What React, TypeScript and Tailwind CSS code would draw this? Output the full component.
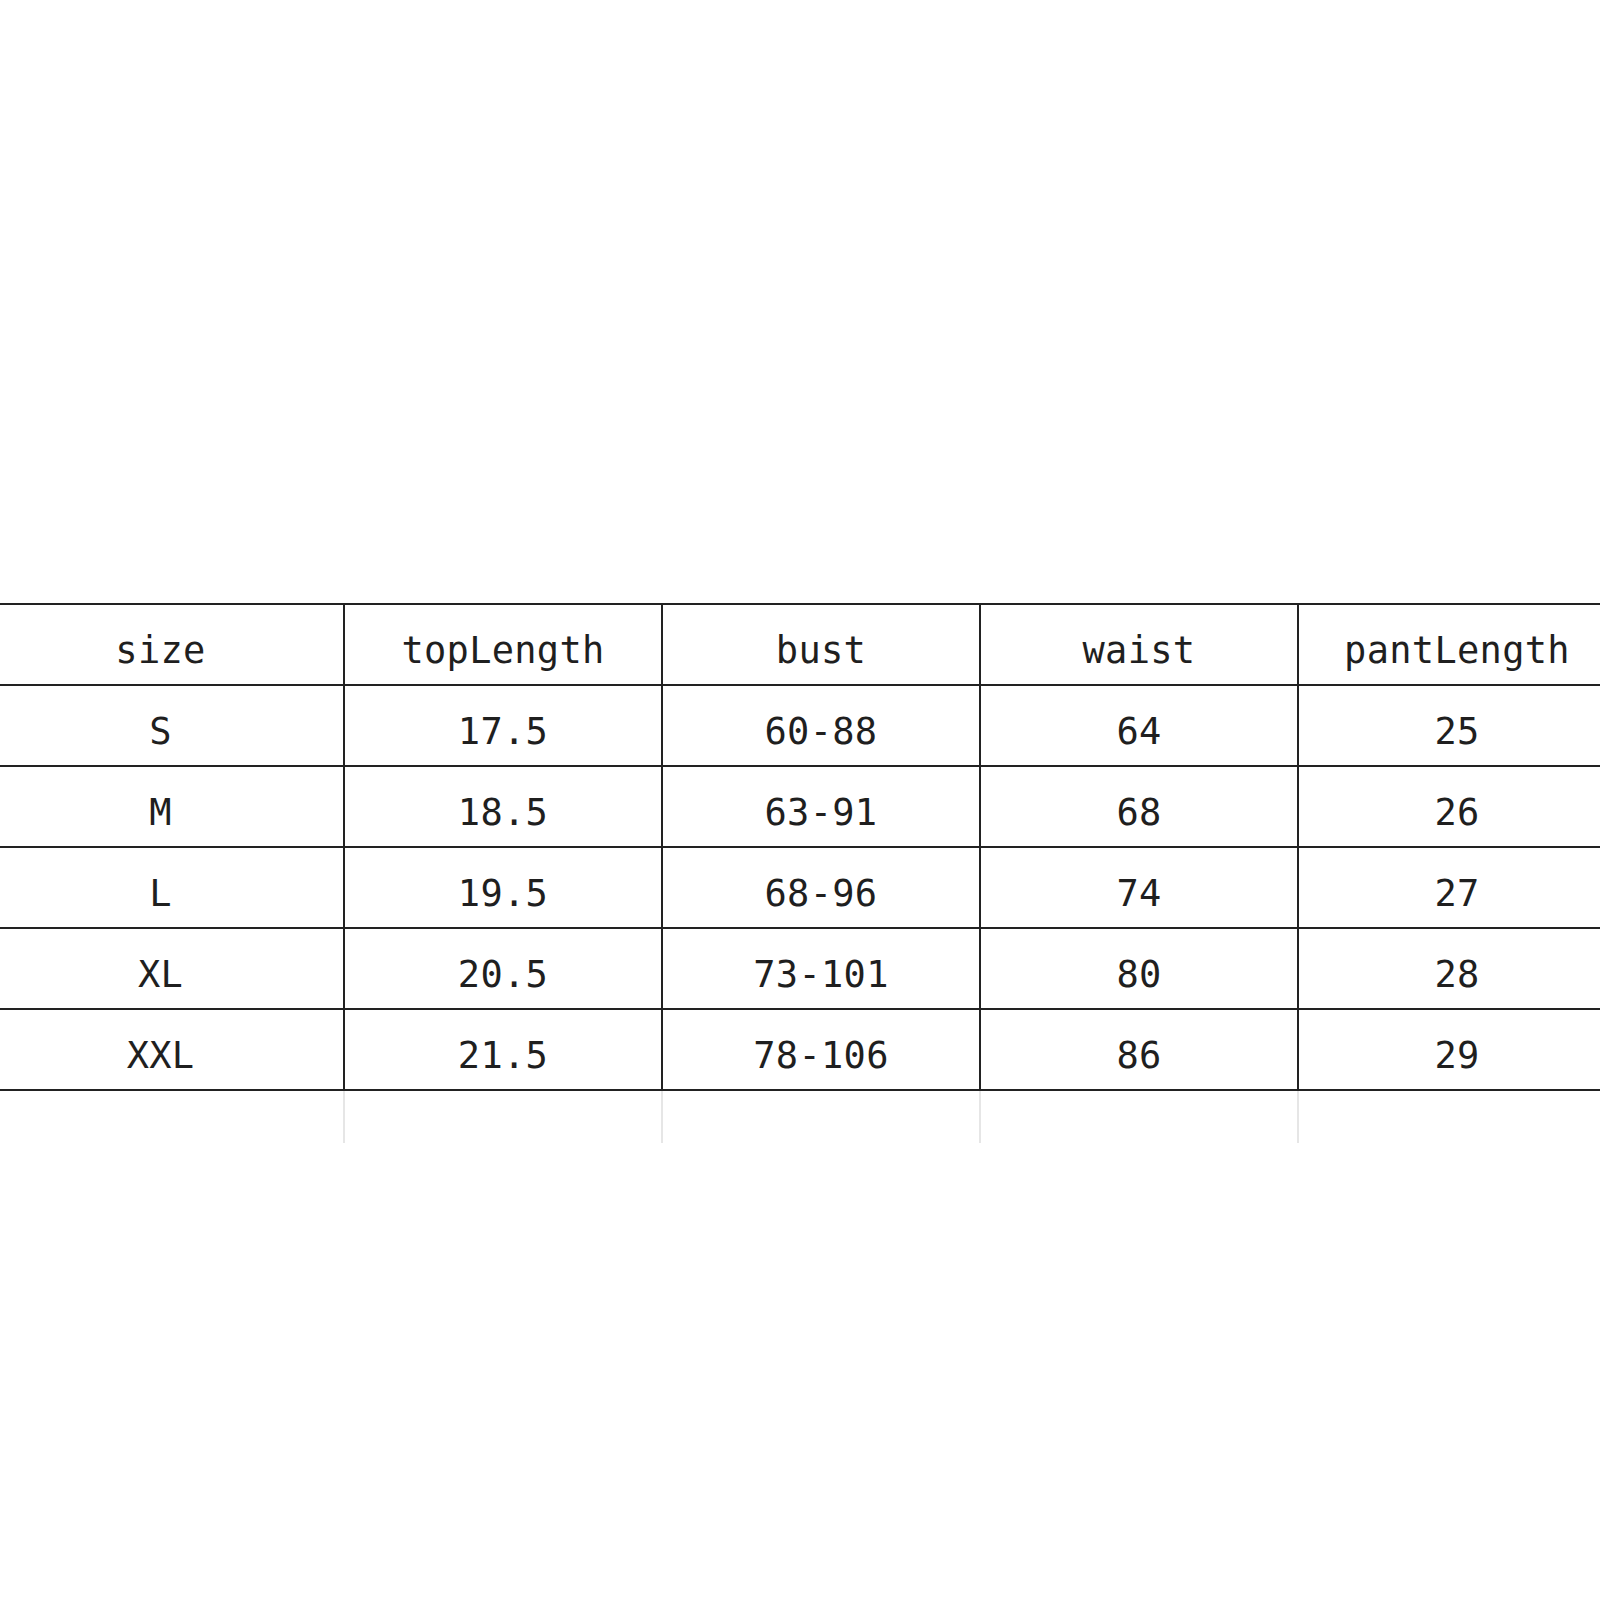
const headers = ['size', 'topLength', 'bust', 'waist', 'pantLength'];

const rows = [
  ['S', '17.5', '60-88', '64', '25'],
  ['M', '18.5', '63-91', '68', '26'],
  ['L', '19.5', '68-96', '74', '27'],
  ['XL', '20.5', '73-101', '80', '28'],
  ['XXL', '21.5', '78-106', '86', '29'],
];

const grid = 'grid grid-cols-[367px_318px_318px_318px_318px] -ml-[22px] w-[1639px]';

function Row({ cells }: { cells: string[] }) {
  return (
    <div className={grid}>
      {cells.map((c, i) => (
        <div
          key={i}
          className="h-[81px] pt-[12px] border-b-2 border-r-2 border-[#222] flex items-center justify-center text-[37px] tracking-[0.3px] text-[#1f1f1f]"
        >
          {c}
        </div>
      ))}
    </div>
  );
}

export default function App() {
  return (
    <div className="w-[1600px] h-[1600px] bg-white overflow-hidden pt-[603px] font-['DejaVu_Sans_Mono',monospace]">
      <div className="border-t-2 border-[#222] w-[1639px] -ml-[22px]">
        <div className="ml-[22px]">
          <Row cells={headers} />
          {rows.map((r) => (
            <Row key={r[0]} cells={r} />
          ))}
          {/* faint continuation of the column lines */}
          <div className={grid}>
            {headers.map((h) => (
              <div key={h} className="h-[52px] border-r-2 border-[#e6e6e6]" />
            ))}
          </div>
        </div>
      </div>
    </div>
  );
}
